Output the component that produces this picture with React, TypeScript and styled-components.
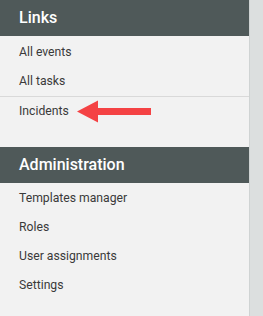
import React from "react";
import styled, { createGlobalStyle } from "styled-components";

const Global = createGlobalStyle`
  html, body { margin: 0; padding: 0; }
  body {
    width: 263px;
    height: 316px;
    overflow: hidden;
    background: #dcdfdf;
    font-family: Roboto, "Liberation Sans", sans-serif;
  }
`;

const Page = styled.div`
  display: flex;
  width: 263px;
  height: 316px;
`;

const Panel = styled.nav`
  position: relative;
  width: 249px;
  height: 316px;
  background: #f2f2f2;
  border-right: 1px solid #cfd3d3;
  display: flex;
  flex-direction: column;
`;

const Section = styled.section<{ $gap?: number }>`
  margin-top: ${(p) => p.$gap ?? 0}px;
  display: flex;
  flex-direction: column;
`;

const Header = styled.h2`
  margin: 0;
  height: 36px;
  line-height: 36px;
  padding: 0 19px;
  background: #4f5959;
  color: #ffffff;
  font-size: 16px;
  font-weight: 500;
`;

const List = styled.ul<{ $pt?: number }>`
  list-style: none;
  margin: 0;
  padding: ${(p) => p.$pt ?? 0}px 0 0 0;
`;

const Item = styled.li<{ $divider?: boolean }>`
  height: 29px;
  line-height: 29px;
  padding: 0 19px;
  font-size: 12.2px;
  color: #3a3a3a;
  border-top: ${(p) => (p.$divider ? "1px solid #d9d9d9" : "none")};
`;

const Arrow = styled.svg`
  position: absolute;
  left: 76px;
  top: 99px;
`;

export default function App() {
  return (
    <>
      <Global />
      <Page>
        <Panel>
          <Section>
            <Header>Links</Header>
            <List $pt={2}>
              <Item>All events</Item>
              <Item>All tasks</Item>
              <Item $divider>Incidents</Item>
            </List>
          </Section>
          <Section $gap={21}>
            <Header>Administration</Header>
            <List $pt={1}>
              <Item>Templates manager</Item>
              <Item>Roles</Item>
              <Item>User assignments</Item>
              <Item>Settings</Item>
            </List>
          </Section>
          <Arrow width="76" height="25" viewBox="0 0 76 25">
            <polygon
              points="1,12.5 22,1.5 22,9 75,9 75,16 22,16 22,23.5"
              fill="#f44244"
            />
          </Arrow>
        </Panel>
      </Page>
    </>
  );
}
